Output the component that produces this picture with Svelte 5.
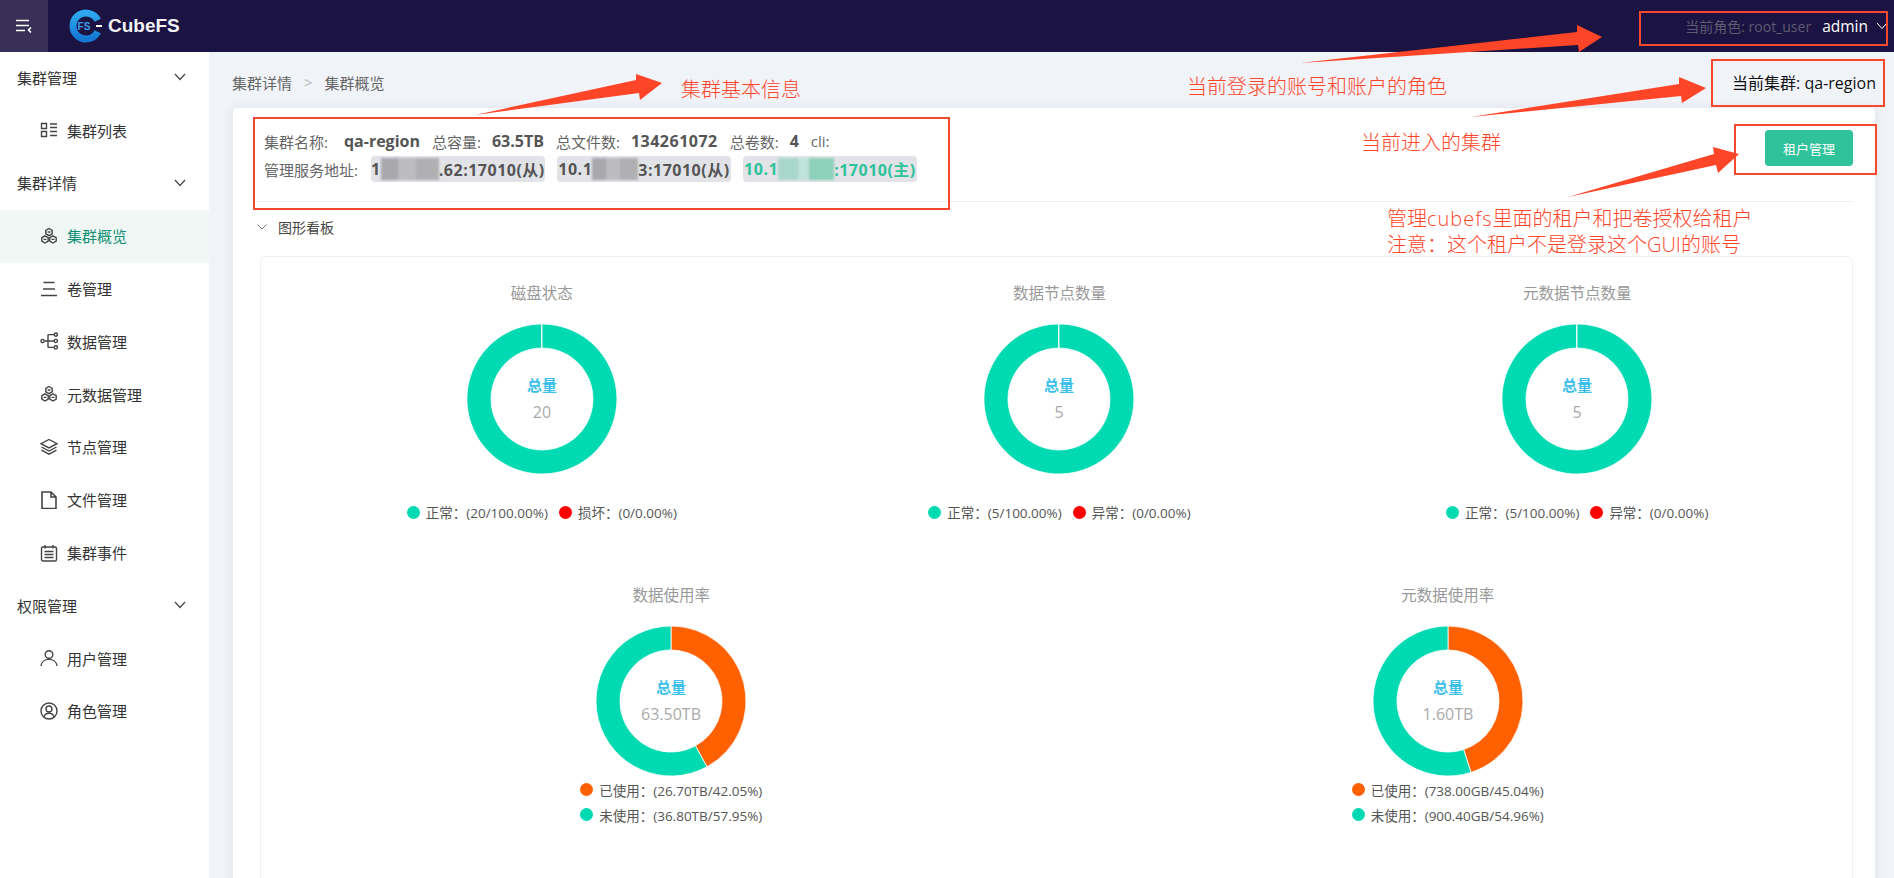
<script>
  const menu = [
    { title: "集群管理", items: [{ icon: "list", label: "集群列表" }] },
    {
      title: "集群详情",
      items: [
        { icon: "hex", label: "集群概览", active: true },
        { icon: "lines", label: "卷管理" },
        { icon: "tree", label: "数据管理" },
        { icon: "hex", label: "元数据管理" },
        { icon: "layers", label: "节点管理" },
        { icon: "file", label: "文件管理" },
        { icon: "calendar", label: "集群事件" }
      ]
    },
    {
      title: "权限管理",
      items: [
        { icon: "user", label: "用户管理" },
        { icon: "role", label: "角色管理" }
      ]
    }
  ];

  const icons = {
    list: '<path d="M1.500 2.500h5v5h-5zM1.500 10.500h5v5h-5zM10 3h7M10 6.500h7M10 10.500h7M10 14.500h7"/>',
    hex: '<path d="M9 1.500l3.200 1.800v3.600L9 8.700 5.800 6.900V3.300zM5 8.800l3.200 1.800v3.600L5 16l-3.200-1.800v-3.600zM13 8.800l3.200 1.800v3.600L13 16l-3.200-1.800v-3.600z"/><path d="M7.600 5h2.800M3.600 12.400h2.800M11.600 12.400h2.800"/>',
    lines: '<path d="M3.500 2.500h11M3 9h12M1 15.500h16"/>',
    tree: '<circle cx="2.600" cy="9" r="1.600"/><circle cx="15.800" cy="2.600" r="1.600"/><circle cx="15.800" cy="9" r="1.600"/><circle cx="15.800" cy="15.400" r="1.600"/><path d="M4.200 9h10M8 2.600h6.200M8 15.400h6.200M8 2.600v12.800"/>',
    layers: '<path d="M9 1.500l8 4.200-8 4.200-8-4.200zM1.500 9l7.500 4 7.500-4M1.500 12.200l7.500 4 7.500-4"/>',
    file: '<path d="M2 1h9l5 5v11.500H2zM11 1v5h5" stroke-width="1.600"/>',
    calendar: '<rect x="1.500" y="3" width="15" height="14" rx="1.500"/><path d="M5 1v3.500M13 1v3.500M4.500 7.500h9M4.500 10.500h9M4.500 13.500h9"/>',
    user: '<circle cx="9" cy="5.500" r="3.800"/><path d="M1 17c.4-4 3.600-6.600 8-6.600s7.600 2.600 8 6.600"/>',
    role: '<circle cx="9" cy="9" r="8"/><circle cx="9" cy="7" r="3"/><path d="M3.800 15c.8-2.500 2.800-3.800 5.200-3.800s4.400 1.300 5.200 3.800"/>'
  };

  const teal = "#00dab3";
  const orange = "#ff6000";
  const red = "#ff0000";

  const topCharts = [
    {
      title: "磁盘状态",
      total: "20",
      parts: [{ pct: 100, color: teal }],
      legend: [
        { color: teal, text: "正常：(20/100.00%)" },
        { color: red, text: "损坏：(0/0.00%)" }
      ]
    },
    {
      title: "数据节点数量",
      total: "5",
      parts: [{ pct: 100, color: teal }],
      legend: [
        { color: teal, text: "正常：(5/100.00%)" },
        { color: red, text: "异常：(0/0.00%)" }
      ]
    },
    {
      title: "元数据节点数量",
      total: "5",
      parts: [{ pct: 100, color: teal }],
      legend: [
        { color: teal, text: "正常：(5/100.00%)" },
        { color: red, text: "异常：(0/0.00%)" }
      ]
    }
  ];

  const bottomCharts = [
    {
      title: "数据使用率",
      total: "63.50TB",
      parts: [
        { pct: 42.05, color: orange },
        { pct: 57.95, color: teal }
      ],
      legend: [
        { color: orange, text: "已使用：(26.70TB/42.05%)" },
        { color: teal, text: "未使用：(36.80TB/57.95%)" }
      ]
    },
    {
      title: "元数据使用率",
      total: "1.60TB",
      parts: [
        { pct: 45.04, color: orange },
        { pct: 54.96, color: teal }
      ],
      legend: [
        { color: orange, text: "已使用：(738.00GB/45.04%)" },
        { color: teal, text: "未使用：(900.40GB/54.96%)" }
      ]
    }
  ];

  // ring segments, clockwise from twelve o'clock
  function slices(parts) {
    let start = 0;
    return parts.map((p) => {
      const end = start + Math.min(p.pct, 99.9);
      const d = arc(start, end);
      start += p.pct;
      return { d, color: p.color };
    });
  }

  function arc(from, to) {
    const pt = (pct, r) => {
      const a = (pct / 100) * Math.PI * 2 - Math.PI / 2;
      return `${(75 + r * Math.cos(a)).toFixed(3)} ${(75 + r * Math.sin(a)).toFixed(3)}`;
    };
    const big = to - from > 50 ? 1 : 0;
    return `M${pt(from, 75)}A75 75 0 ${big} 1 ${pt(to, 75)}L${pt(to, 51)}A51 51 0 ${big} 0 ${pt(from, 51)}Z`;
  }
</script>

{#snippet chart(c, stacked)}
  <div class="chart">
    <div class="chart-title">{c.title}</div>
    <svg class="donut" width="150" height="150" viewBox="0 0 150 150">
      {#each slices(c.parts) as s}
        <path d={s.d} fill={s.color} stroke="#fff" stroke-width="0.800" />
      {/each}
      <text class="donut-label" x="75" y="67" text-anchor="middle">总量</text>
      <text class="donut-value" x="75" y="94" text-anchor="middle">{c.total}</text>
    </svg>
    <div class="legend" class:stacked>
      {#each c.legend as l}
        <div class="legend-item">
          <i style="background: {l.color}"></i>{l.text}
        </div>
      {/each}
    </div>
  </div>
{/snippet}

<div class="page">
  <header class="topbar">
    <div class="toggle">
      <svg width="16" height="14" viewBox="0 0 16 14" fill="none" stroke="#fff" stroke-width="1.600">
        <path d="M0 1.500h13M0 6.500h13M0 11.500h9M15 8.500l-2.500 2.500 2.500 2.500" />
      </svg>
    </div>
    <div class="logo">
      <svg width="34" height="34" viewBox="0 0 34 34" fill="none">
        <defs>
          <linearGradient id="ring" x1="0" y1="0" x2="0" y2="1">
            <stop offset="0" stop-color="#2ea8f0" />
            <stop offset="1" stop-color="#1477d4" />
          </linearGradient>
        </defs>
        <path d="M28.700 11.300a13 13 0 1 0 0 11.400" stroke="url(#ring)" stroke-width="7" />
        <path d="M27 17h6" stroke="#fff" stroke-width="2" />
        <text x="15" y="20.500" text-anchor="middle" class="logo-fs">FS</text>
      </svg>
      <span>CubeFS</span>
    </div>
    <div class="account">
      <span class="role">当前角色: root_user</span>
      <span class="admin">admin</span>
      <svg width="12" height="8" viewBox="0 0 12 8" fill="none" stroke="#fff" stroke-width="1">
        <path d="M1 1l5 5.500L11 1" />
      </svg>
    </div>
  </header>

  <div class="body">
    <aside class="sidebar">
      {#each menu as group}
        <div class="menu-title">
          {group.title}
          <svg width="12" height="8" viewBox="0 0 12 8" fill="none" stroke="#444" stroke-width="1.200">
            <path d="M1 1l5 5.500L11 1" />
          </svg>
        </div>
        {#each group.items as item}
          <div class="menu-item" class:active={item.active}>
            <svg width="18" height="18" viewBox="0 0 18 18" fill="none" stroke="#444" stroke-width="1.400">
              {@html icons[item.icon]}
            </svg>
            {item.label}
          </div>
        {/each}
      {/each}
    </aside>

    <main class="main">
      <div class="crumbs">
        <div class="crumb-path">
          <span>集群详情</span>
          <b>&gt;</b>
          <span>集群概览</span>
        </div>
        <div class="current">当前集群: qa-region</div>
      </div>

      <section class="card">
        <div class="card-head">
          <div class="info">
            <div class="info-row">
              <span class="lbl first">集群名称:</span><strong>qa-region</strong>
              <span class="lbl">总容量:</span><strong>63.5TB</strong>
              <span class="lbl">总文件数:</span><strong class="num">134261072</strong>
              <span class="lbl">总卷数:</span><strong>4</strong>
              <span class="lbl">cli:</span>
            </div>
            <div class="info-row">
              <span class="lbl addr">管理服务地址:</span>
              <span class="tag">1<i class="blur b1"></i>.62:17010(从)</span>
              <span class="tag">10.1<i class="blur b2"></i>3:17010(从)</span>
              <span class="tag master">10.1<i class="blur b3"></i>:17010(主)</span>
            </div>
          </div>
          <button class="tenant">租户管理</button>
        </div>

        <div class="section-head">
          <svg width="10" height="6" viewBox="0 0 10 6" fill="none" stroke="#777" stroke-width="1">
            <path d="M.5.500L5 5 9.500.500" />
          </svg>
          图形看板
        </div>

        <div class="panel">
          <div class="row three">
            {#each topCharts as c}
              {@render chart(c, false)}
            {/each}
          </div>
          <div class="row two">
            {#each bottomCharts as c}
              {@render chart(c, true)}
            {/each}
          </div>
        </div>
      </section>
    </main>
  </div>

  <!-- annotations pasted on top of the screenshot -->
  <svg class="marks" width="1894" height="878" viewBox="0 0 1894 878">
    <g fill="none" stroke="#f4492c" stroke-width="2">
      <rect x="254" y="118" width="695" height="91" />
      <rect x="1640" y="12" width="247" height="33" />
      <rect x="1712" y="60" width="172" height="46" />
      <rect x="1735" y="125" width="141" height="49" />
    </g>
    <g fill="#ff4528">
      <polygon points="475,115 636,80 636,74 662,83 640,100 639,93" />
      <polygon points="1300,63 1577,32 1577,25 1602,37 1579,52 1578,45" />
      <polygon points="1471,117 1679,84 1679,77 1706,88 1682,103 1681,96" />
      <polygon points="1568,197 1714,154 1713,147 1739,154 1718,173 1716,165" />
    </g>
  </svg>
  <div class="note n1">集群基本信息</div>
  <div class="note n2">当前登录的账号和账户的角色</div>
  <div class="note n3">当前进入的集群</div>
  <div class="note n4">管理<span class="wide">cubefs</span>里面的租户和把卷授权给租户<br />注意：这个租户不是登录这个GUI的账号</div>
</div>

<style>
  :global(body) {
    margin: 0;
  }
  .page {
    position: relative;
    height: 878px;
    overflow: hidden;
    font-family: "Open Sans", "Noto Sans CJK SC", sans-serif;
    font-size: 15px;
    color: #444;
    background: #f0f3f8;
  }

  .topbar {
    height: 52px;
    display: flex;
    align-items: center;
    background: #1b1341;
  }
  .toggle {
    width: 48px;
    height: 52px;
    display: flex;
    align-items: center;
    justify-content: center;
    background: #393057;
  }
  .logo {
    display: flex;
    align-items: center;
    gap: 5px;
    margin-left: 21px;
    color: #f2f2f6;
    font-family: "Liberation Sans", sans-serif;
    font-size: 19px;
    font-weight: 700;
  }
  .logo-fs {
    fill: #3aa0f0;
    font-size: 10px;
    font-weight: 700;
  }
  .account {
    margin-left: auto;
    margin-right: 6px;
    display: flex;
    align-items: center;
    font-size: 14px;
  }
  .role {
    color: #5f5b73;
  }
  .admin {
    margin: 0 8px 0 11px;
    color: #fff;
    font-size: 15.500px;
    font-weight: 500;
  }

  .body {
    display: flex;
    height: 826px;
  }
  .sidebar {
    width: 209px;
    flex: none;
    background: #fff;
  }
  .menu-title,
  .menu-item {
    height: 52.800px;
    box-sizing: border-box;
    display: flex;
    align-items: center;
    color: #333;
    padding-bottom: 2px;
  }
  .menu-title {
    justify-content: space-between;
    padding-left: 17px;
    padding-right: 23px;
  }
  .menu-item {
    gap: 9px;
    padding-left: 40px;
  }
  .menu-item.active {
    background: #f1f7f5;
    color: #0e8f74;
  }

  .main {
    flex: 1;
    padding-left: 23px;
    padding-right: 19px;
  }
  .crumbs {
    height: 56px;
    display: flex;
    align-items: center;
    justify-content: space-between;
    box-sizing: border-box;
    padding-top: 4px;
  }
  .crumb-path {
    display: flex;
    align-items: center;
    color: #666;
  }
  .crumb-path b {
    margin: 0 12px;
    color: #bbb;
    font-weight: 400;
  }
  .current {
    margin-right: -1px;
    color: #111;
    font-size: 16px;
  }

  .card {
    height: 800px;
    margin-left: 1px;
    box-sizing: border-box;
    padding: 0 22px 0 23px;
    background: #fff;
    border-radius: 4px;
    box-shadow: 0 0 12px rgba(40, 50, 90, 0.08);
  }
  .card-head {
    height: 94px;
    box-sizing: border-box;
    display: flex;
    justify-content: space-between;
    align-items: flex-start;
    padding: 19px 0 0 8px;
    border-bottom: 1px solid #eeeff6;
  }
  .info-row {
    display: flex;
    align-items: center;
    height: 28px;
    color: #666;
  }
  .info-row strong {
    color: #555;
    font-size: 16px;
    font-weight: 700;
    margin-right: 12px;
  }
  .info-row strong.num {
    letter-spacing: 0.500px;
  }
  .lbl {
    margin-right: 11px;
  }
  .lbl.first {
    margin-right: 16px;
  }
  .lbl.addr {
    margin-right: 13px;
  }
  .tag {
    height: 26px;
    width: 174px;
    box-sizing: border-box;
    display: flex;
    align-items: center;
    justify-content: center;
    margin-right: 12px;
    border-radius: 4px;
    background: #e2e3e7;
    color: #555;
    font-size: 16px;
    font-weight: 700;
    letter-spacing: 0.500px;
    white-space: nowrap;
  }
  .tag.master {
    color: #2fc29b;
  }
  .blur {
    height: 22px;
    flex: none;
    filter: blur(0.800px);
    background: linear-gradient(90deg, #a9a9ad 0 30%, #bcbcbf 30% 60%, #b0b0b3 60% 100%);
  }
  .b1 {
    width: 58px;
  }
  .b2 {
    width: 46px;
  }
  .b3 {
    width: 56px;
    background: linear-gradient(90deg, #aad7cb 0 35%, #bfe3d9 35% 55%, #8ed1bb 55% 100%);
  }
  .tenant {
    width: 88px;
    height: 36px;
    margin-top: 3px;
    border: 0;
    border-radius: 4px;
    background: #2fc29b;
    color: #fff;
    font-family: inherit;
    font-size: 13px;
  }

  .section-head {
    height: 54px;
    box-sizing: border-box;
    display: flex;
    align-items: center;
    gap: 11px;
    padding: 0 0 5px 1px;
    font-size: 14px;
    color: #444;
  }
  .panel {
    margin-left: 4px;
    height: 640px;
    padding: 26px 16px 0 22px;
    border: 1px solid #eef0f6;
    border-radius: 6px;
  }
  .row {
    display: grid;
  }
  .three {
    grid-template-columns: repeat(3, 1fr);
    margin-bottom: 60px;
  }
  .two {
    grid-template-columns: repeat(2, 1fr);
  }
  .chart {
    display: flex;
    flex-direction: column;
    align-items: center;
  }
  .chart-title {
    height: 20px;
    line-height: 20px;
    margin-bottom: 21px;
    color: #999;
    font-size: 15.500px;
  }
  .donut {
    display: block;
  }
  .donut-label {
    fill: #3cbfe8;
    font-size: 15px;
    font-weight: 700;
  }
  .donut-value {
    fill: #aaa;
    font-size: 16px;
  }
  .legend {
    display: flex;
    gap: 11px;
    margin-top: 25px;
    font-size: 13.500px;
    color: #555;
  }
  .legend.stacked {
    flex-direction: column;
    gap: 0;
    margin-top: 1px;
  }
  .legend-item {
    height: 26px;
    display: flex;
    align-items: center;
    gap: 6px;
    white-space: nowrap;
  }
  .stacked .legend-item {
    height: 25px;
  }
  .legend-item i {
    width: 13px;
    height: 13px;
    border-radius: 50%;
  }

  .marks {
    position: absolute;
    left: 0;
    top: 0;
    pointer-events: none;
  }
  .note {
    position: absolute;
    color: #ff4528;
    font-size: 20px;
    font-weight: 300;
    line-height: 26px;
    white-space: nowrap;
  }
  .wide {
    letter-spacing: 1px;
  }
  .n1 {
    left: 681px;
    top: 77px;
  }
  .n2 {
    left: 1187px;
    top: 74px;
  }
  .n3 {
    left: 1361px;
    top: 130px;
  }
  .n4 {
    left: 1387px;
    top: 206px;
    height: 50px;
    overflow: hidden;
  }
</style>
